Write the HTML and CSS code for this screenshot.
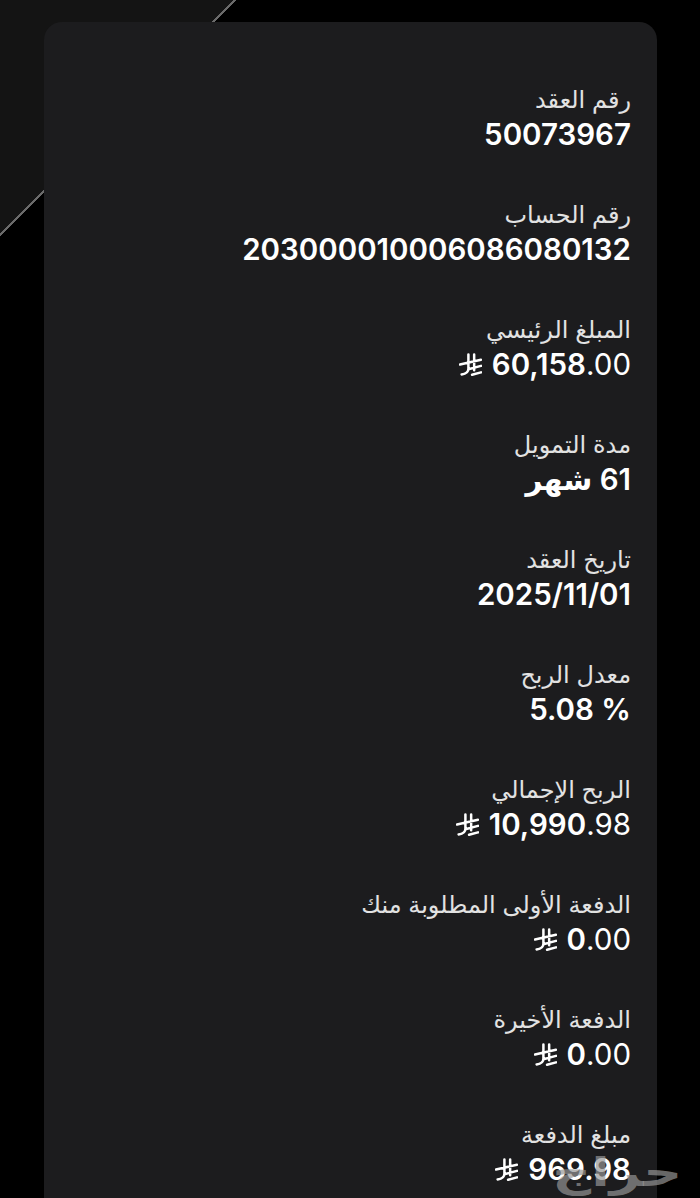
FILE: index.html
```html
<!DOCTYPE html>
<html lang="ar">
<head>
  <meta charset="utf-8">
  <title>تفاصيل العقد</title>
  <link rel="stylesheet" href="styles.css">
</head>
<body>

  <div class="card" dir="rtl">

    <div class="item">
      <div class="label">رقم العقد</div>
      <div class="value">50073967</div>
    </div>

    <div class="item">
      <div class="label">رقم الحساب</div>
      <div class="value">203000010006086080132</div>
    </div>

    <div class="item">
      <div class="label">المبلغ الرئيسي</div>
      <div class="value money">
        <span class="amount" dir="ltr"><b>60,158</b>.00</span>
        <svg class="riyal" viewBox="0 0 22 22"><path d="M9 1.5V15Q9 19.5 2.5 20.5M14.5 1.5V16.5M1 11L21 6.5M9 15.5L21 12.3M12.5 20.8L21 18.5"/></svg>
      </div>
    </div>

    <div class="item">
      <div class="label">مدة التمويل</div>
      <div class="value">61 شهر</div>
    </div>

    <div class="item">
      <div class="label">تاريخ العقد</div>
      <div class="value">2025/11/01</div>
    </div>

    <div class="item">
      <div class="label">معدل الربح</div>
      <div class="value"><span dir="ltr">5.08 %</span></div>
    </div>

    <div class="item">
      <div class="label">الربح الإجمالي</div>
      <div class="value money">
        <span class="amount" dir="ltr"><b>10,990</b>.98</span>
        <svg class="riyal" viewBox="0 0 22 22"><path d="M9 1.5V15Q9 19.5 2.5 20.5M14.5 1.5V16.5M1 11L21 6.5M9 15.5L21 12.3M12.5 20.8L21 18.5"/></svg>
      </div>
    </div>

    <div class="item">
      <div class="label">الدفعة الأولى المطلوبة منك</div>
      <div class="value money">
        <span class="amount" dir="ltr"><b>0</b>.00</span>
        <svg class="riyal" viewBox="0 0 22 22"><path d="M9 1.5V15Q9 19.5 2.5 20.5M14.5 1.5V16.5M1 11L21 6.5M9 15.5L21 12.3M12.5 20.8L21 18.5"/></svg>
      </div>
    </div>

    <div class="item">
      <div class="label">الدفعة الأخيرة</div>
      <div class="value money">
        <span class="amount" dir="ltr"><b>0</b>.00</span>
        <svg class="riyal" viewBox="0 0 22 22"><path d="M9 1.5V15Q9 19.5 2.5 20.5M14.5 1.5V16.5M1 11L21 6.5M9 15.5L21 12.3M12.5 20.8L21 18.5"/></svg>
      </div>
    </div>

    <div class="item last">
      <div class="label">مبلغ الدفعة</div>
      <div class="value money">
        <span class="amount" dir="ltr"><b>969.98</b></span>
        <svg class="riyal" viewBox="0 0 22 22"><path d="M9 1.5V15Q9 19.5 2.5 20.5M14.5 1.5V16.5M1 11L21 6.5M9 15.5L21 12.3M12.5 20.8L21 18.5"/></svg>
      </div>
    </div>

  </div>

  <!-- watermark -->
  <div class="watermark">حراج</div>

</body>
</html>
```

FILE: styles.css
```css
html, body {
  margin: 0;
  height: 1198px;
  overflow: hidden;
}

body {
  position: relative;
  font-family: Inter, "DejaVu Sans", sans-serif;
  background: linear-gradient(135deg, #141414 0 165px, #6b6b6b 165px 167px, #000 167px);
}

.card {
  margin: 22px 0 0 44px;
  width: 613px;
  height: 1176px;
  box-sizing: border-box;
  padding: 62px 26px 0 0;
  background: #1c1c1e;
  border-radius: 18px 18px 0 0;
  text-align: right;
}

.item {
  margin-bottom: 47px;
}

.item.last {
  margin-bottom: 0;
}

.label {
  font-size: 24px;
  line-height: 32px;
  color: #e2e2e2;
}

.value {
  font-size: 29.5px;
  line-height: 36px;
  font-weight: 600;
  color: #fff;
}

.money {
  display: flex;
  align-items: center;
  gap: 10px;
}

.money .amount {
  font-weight: 400;
}

.money .amount b {
  font-weight: 600;
}

.riyal {
  width: 23px;
  height: 23px;
  fill: none;
  stroke: #fff;
  stroke-width: 2.4;
  stroke-linecap: round;
}

.watermark {
  position: absolute;
  right: 18px;
  top: 1150px;
  font-family: "DejaVu Sans", sans-serif;
  font-weight: bold;
  font-size: 40px;
  line-height: 44px;
  transform: scaleX(1.35);
  transform-origin: right center;
  color: rgba(150, 150, 150, 0.7);
}
```
